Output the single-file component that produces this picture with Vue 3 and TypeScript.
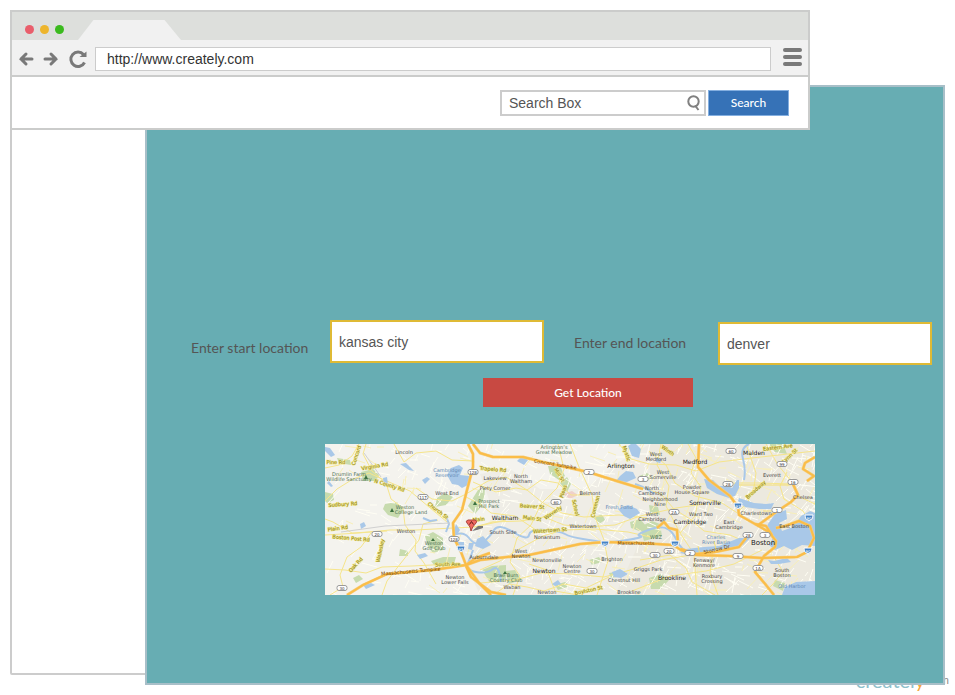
<script setup lang="ts">
import { ref } from 'vue'

interface MapLabel {
  x: number
  y: number
  text: string
  kind?: 'town' | 'park' | 'water' | 'road' | 'pike'
  size?: number
  angle?: number
}

interface Shield {
  x: number
  y: number
  text: string
  interstate?: boolean
}

const address = ref('http://www.creately.com')
const query = ref('')
const startLocation = ref('kansas city')
const endLocation = ref('denver')

const parks: string[] = [
  'M36 28l12-3 6 6-3 6-13 0z', 'M60 60l12-2 6 8-5 8-10-3-5-6z', 'M112 54l8-5 8 4-7 8-11 2z',
  'M143 62l10-16 7-3-1 16-9 11z', 'M100 92l8-4 10 6 0 12-10 3-5-6z', 'M106 117l12-4 13 0-2 7-8 2-12-1z',
  'M157 126l10-4 14-1 0 14-16 4z', 'M180 127l10-1 6 10-12 4z', 'M223 22l12 0 5 10-6 4-9-6z',
  'M235 39l7-6 4 7-4 8z', 'M269 74l8-4 3 6-6 4z', 'M305 78l10-3 7 8-8 4-8-3z', 'M264 116l10-3 3 5-10 3z',
  'M315 83l12-6 8 3 2 12-18 5z', 'M314 32l8-3 6 4-8 5z', 'M444 0l14 0 4 10-12-2z', 'M450 136l10 3-2 8-10-5z',
  'M324 134l12-4 8 6-8 9-10 0z', 'M75 105l8 2 0 5-9 0z', 'M0 48l8 2 1 6-7 3-2-2z', 'M12 14l13 2 1 5-12-2z',
  'M28 134l6-3 4 4-7 4z', 'M284 129l12-2 2 5-12 2z', 'M324 61l9 2 2 8-10-3z', 'M230 141l10-3 5 4-12 4z',
]

const waters: string[] = [
  'M126 24l8-3 4 3-3 7 10 1-2 9-6 3-4-3-6-1-5-9z', 'M0 3l5 1 5 7-4 2-6-6z', 'M75 20l6-1 8 8-5-1z',
  'M58 34l4-1 1 8-4 2z', 'M97 36l5-3 3 2-5 5z', 'M35 80l4-2 2 4-5 3z', 'M4 37l4 5-2 1-4-4z',
  'M128 89l3-9 4 6-3 5z', 'M132 98l7 0 0 6-7 2z', 'M144 99l5 0-2 7-4-1z', 'M92 111l8-2 3 3-8 3z',
  'M38 141l8-2 4 2-9 4z', 'M152 95l6-3 8 9-8 4-8-3z', 'M295 32l6-5 7 1 3 6-9 4-11-1z', 'M303 2l6-4 7 7-2 9-7-2z',
  'M293 65l10-4 9 4 3 4-10 6-6-3z', 'M287 128l8-3 8 5-7 4-7-1z', 'M227 140l6-4 3 4-6 2z',
  'M379 35l9 1 6 6 9 0 4 2 5-8 2 0 0 8-4 8-6 2-12-4-10-6z', 'M414 54l15 5 12 1 8-1-3 6-12 0-14-2-7-6z',
  'M443 80l7-10 11-4 1 9-8 4 3 8 11-4 8-11 9-5 5 2 0 33-13-1-10 5-8-4-9 4-6-5 5-9-10-2z',
  'M355 109l6-4 18-2 15-1 20-8 11 0-7 7-17 4-23 5-13 1z', 'M460 143l11-5 19-1 0 14-33 0z',
  'M443 116l6 1 13-3 4 4-12 2-8 0z', 'M331 14l6 1-2 4-4-1z', 'M197 12l-5 5 7 4 4-5z',
]

const rivers: string[] = [
  'M124 94Q137 85 144 94T158 98 169 86 188 88 204 91 220 86 240 90 258 95 277 98 302 96 315 92 326 85 350 93 360 105',
  'M148 106Q146 112 143 119T151 128 168 125 176 138', 'M419 36Q421 26 418 15T424 0', 'M310 40l8 3 12 7',
  'M98 74l7 3 7-1', 'M121 72l3 8-3 8',
]

const mainRoads: string[] = [
  'M0 24L14 21 27 12 34 0', 'M0 57L12 45 28 35 44 29 57 35 85 47 104 63 122 78', 'M0 91L34 89 65 86 91 86 128 84 150 83 181 76',
  'M0 75L8 78 27 89 62 87', 'M41 0L38 10 47 27 61 39 66 55 78 64 80 81 91 96 90 107 99 119 111 140',
  'M57 151L62 137 72 124 94 96 98 80 113 76', 'M0 125L20 126 41 129 57 123 87 122 127 120',
  'M91 44L107 55 127 57 141 50 163 37 181 33 202 46 218 59 237 69 259 73 294 71 322 74',
  'M148 17L127 16 111 7 91 9 79 18 69 0', 'M148 38L171 48 191 44 202 46 216 36 233 39 246 51 265 51',
  'M149 83L168 78 196 77 219 73 239 81 261 83 290 81 315 72 351 64 379 60',
  'M188 151L195 132 185 118 192 94 206 81 216 60 232 44 239 25 233 0',
  'M155 126L175 117 194 105 218 92 238 86 270 85 303 88 325 93',
  'M155 139L190 136 216 129 246 130 279 133 309 125 336 116 372 110',
  'M245 0L254 23 267 51 270 73 279 96 283 117 272 151', 'M294 0L306 15 324 20 351 21 371 27 394 18 427 14 490 7',
  'M318 44L336 50 349 65 365 75 379 87 405 91 421 98', 'M324 7L341 21 350 39 370 52 397 59 414 70',
  'M336 0L332 21 344 42 341 62 355 89 369 110 372 151', 'M363 0L371 14 366 29 376 43 370 72 355 89',
  'M374 23L391 45 412 39 434 39 467 40', 'M421 0L431 29 429 43 423 58 413 68', 'M441 0L453 21 467 38 475 53 490 60',
  'M388 107L385 129 393 151', 'M437 106L409 120 381 127 345 132 307 147', 'M315 116L345 111 361 124 367 138 390 151',
  'M449 113L458 128 448 140 437 151', 'M204 120L222 126 230 147 253 151', 'M171 149L184 140 202 143 219 147 239 140 261 144 284 133',
  'M5 151L18 143 15 131 22 113 36 103 46 89', 'M139 52L155 60 166 69 190 72 211 86', 'M462 28L455 42 459 55 478 67 490 85',
]

const highways: string[] = [
  'M143 0L148 10 148 23 142 46 137 66 128 79 129 94 136 108 141 121 154 139 166 151',
  'M148 0L155 9 168 13 198 13 218 18 263 28 295 38 318 45',
  'M22 151L38 141 62 130 108 126 141 121 155 116 182 113 204 111 232 105 255 100 280 98 315 99 348 101 356 106 371 111 405 112 437 114 472 113 482 108 489 94 485 82 474 77 460 82 451 84',
  'M332 84L339 78 344 84 352 86 353 100', 'M356 105L371 110 390 108 414 103 421 94',
  'M374 0L373 23 384 36 405 52 413 63 414 71 430 80 444 88 451 97 450 103 439 112 430 128 441 141 449 151',
  'M432 82L451 68 466 58 473 51 467 38', 'M490 13L480 19 478 25 489 32 482 37',
  'M141 121L151 114 165 109', 'M430 80L441 82 447 91', 'M141 122L146 133 154 139 166 148 181 151',
]

const labels: MapLabel[] = [
  { x: 79, y: 10, text: 'Lincoln' }, { x: 50, y: 24, text: 'Virginia Rd', kind: 'road', angle: -10 },
  { x: 24, y: 32, text: 'Drumlin Farm', kind: 'park' }, { x: 24, y: 37, text: 'Wildlife Sanctuary', kind: 'park' },
  { x: 122, y: 28, text: 'Cambridge', kind: 'water' }, { x: 122, y: 33, text: 'Reservoir', kind: 'water' },
  { x: 122, y: 51, text: 'West End' }, { x: 80, y: 65, text: 'Weston', kind: 'park' }, { x: 86, y: 70, text: 'College Land', kind: 'park' },
  { x: 81, y: 89, text: 'Weston' }, { x: 109, y: 101, text: 'Weston', kind: 'park' }, { x: 109, y: 106, text: 'Golf Club', kind: 'park' },
  { x: 130, y: 135, text: 'Newton' }, { x: 130, y: 140, text: 'Lower Falls' }, { x: 159, y: 115, text: 'Auburndale' },
  { x: 170, y: 36, text: 'Lakeview' }, { x: 196, y: 34, text: 'North' }, { x: 196, y: 39, text: 'Waltham' },
  { x: 170, y: 46, text: 'Piety Corner' }, { x: 164, y: 59, text: 'Prospect', kind: 'park' }, { x: 164, y: 64, text: 'Hill Park', kind: 'park' },
  { x: 180, y: 76, text: 'Waltham', kind: 'town' }, { x: 178, y: 90, text: 'South Side' }, { x: 196, y: 109, text: 'West' }, { x: 196, y: 114, text: 'Newton' },
  { x: 222, y: 95, text: 'Nonantum' }, { x: 222, y: 118, text: 'Newtonville' }, { x: 219, y: 129, text: 'Newton', kind: 'town' },
  { x: 247, y: 124, text: 'Newton' }, { x: 247, y: 129, text: 'Centre' }, { x: 181, y: 133, text: 'Brae Burn', kind: 'park' }, { x: 181, y: 138, text: 'Country Club', kind: 'park' },
  { x: 187, y: 145, text: 'Waban' }, { x: 222, y: 150, text: 'Newton' }, { x: 229, y: 5, text: 'Arlington’s', kind: 'park' }, { x: 229, y: 10, text: 'Great Meadow', kind: 'park' },
  { x: 296, y: 24, text: 'Arlington', size: 6 }, { x: 265, y: 51, text: 'Belmont' }, { x: 258, y: 84, text: 'Watertown' }, { x: 294, y: 65, text: 'Fresh Pond', kind: 'water' },
  { x: 287, y: 117, text: 'Brighton' }, { x: 299, y: 138, text: 'Chestnut Hill' }, { x: 323, y: 127, text: 'Griggs Park' }, { x: 304, y: 150, text: 'Brookline' },
  { x: 331, y: 12, text: 'West' }, { x: 331, y: 17, text: 'Medford' }, { x: 370, y: 20, text: 'Medford', kind: 'town' }, { x: 429, y: 11, text: 'Malden', size: 6 },
  { x: 447, y: 33, text: 'Everett' }, { x: 338, y: 30, text: 'West' }, { x: 338, y: 35, text: 'Somerville' }, { x: 327, y: 46, text: 'North' }, { x: 327, y: 51, text: 'Cambridge' },
  { x: 335, y: 57, text: 'Neighborhood' }, { x: 335, y: 62, text: 'Nine' }, { x: 367, y: 45, text: 'Powder' }, { x: 367, y: 50, text: 'House Square' },
  { x: 380, y: 61, text: 'Somerville', size: 6 }, { x: 327, y: 72, text: 'West' }, { x: 327, y: 77, text: 'Cambridge' }, { x: 376, y: 72, text: 'Ward Two' },
  { x: 365, y: 80, text: 'Cambridge', kind: 'town' }, { x: 404, y: 80, text: 'East' }, { x: 404, y: 85, text: 'Cambridge' }, { x: 431, y: 71, text: 'Charlestown' },
  { x: 478, y: 55, text: 'Chelsea' }, { x: 469, y: 84, text: 'East Boston' }, { x: 331, y: 95, text: 'WBZ', kind: 'park' }, { x: 391, y: 95, text: 'Charles', kind: 'water' }, { x: 391, y: 100, text: 'River Basin', kind: 'water' },
  { x: 438, y: 101, text: 'Boston', kind: 'town', size: 7 }, { x: 379, y: 118, text: 'Fenway/' }, { x: 379, y: 123, text: 'Kenmore' }, { x: 347, y: 136, text: 'Brookline', size: 6 },
  { x: 387, y: 134, text: 'Roxbury' }, { x: 387, y: 139, text: 'Crossing' }, { x: 457, y: 128, text: 'South' }, { x: 457, y: 133, text: 'Boston' }, { x: 467, y: 144, text: 'Old Harbor', kind: 'water' },
  { x: 33, y: 12, text: 'Concord', kind: 'road', angle: -72 }, { x: 11, y: 20, text: 'Pine Rd', kind: 'road' }, { x: 18, y: 62, text: 'Sudbury Rd', kind: 'road', angle: -4 },
  { x: 64, y: 43, text: 'N County Rd', kind: 'road', angle: 18 }, { x: 112, y: 68, text: 'Church St', kind: 'road', angle: 38 }, { x: 13, y: 86, text: 'Plain Rd', kind: 'road', angle: -8 },
  { x: 26, y: 96, text: 'Boston Post Rd', kind: 'road', angle: 5 }, { x: 57, y: 107, text: 'Wellesley', kind: 'road', angle: -78 }, { x: 32, y: 122, text: 'Oak Rd', kind: 'road', angle: -48 },
  { x: 86, y: 129, text: 'Massachusetts Turnpike', kind: 'pike', angle: -5 }, { x: 123, y: 122, text: 'South Ave', kind: 'road', angle: -2 }, { x: 154, y: 77, text: 'Main', kind: 'road', angle: -7 },
  { x: 168, y: 27, text: 'Trapelo Rd', kind: 'road', angle: 5 }, { x: 230, y: 22, text: 'Concord Turnpike', kind: 'pike', angle: 9 }, { x: 233, y: 32, text: 'Mill St', kind: 'road', angle: 58 },
  { x: 240, y: 48, text: 'Pleas', kind: 'road', angle: -72 }, { x: 207, y: 64, text: 'Beaver St', kind: 'road', angle: 4 }, { x: 229, y: 70, text: 'Waverly', kind: 'road', angle: -34 },
  { x: 207, y: 76, text: 'Main St', kind: 'road', angle: 7 }, { x: 249, y: 64, text: 'School', kind: 'road', angle: 77 }, { x: 272, y: 63, text: 'Common', kind: 'road', angle: -76 },
  { x: 225, y: 88, text: 'Watertown St', kind: 'road', angle: -4 }, { x: 311, y: 101, text: 'Massachusetts', kind: 'pike' }, { x: 392, y: 107, text: 'Storrow Dr', kind: 'pike', angle: -13 },
  { x: 432, y: 47, text: 'Broadway', kind: 'road', angle: -42 }, { x: 453, y: 5, text: 'Eastern Ave', kind: 'road', angle: -7 }, { x: 466, y: 13, text: 'Lynn St', kind: 'road', angle: -43 },
  { x: 300, y: 10, text: 'Mystic', kind: 'road', angle: 72 }, { x: 342, y: 8, text: 'Winth', kind: 'road', angle: 35 }, { x: 264, y: 148, text: 'Boylston St', kind: 'road', angle: -12 },
]

const shields: Shield[] = [
  { x: 98, y: 53, text: '117' }, { x: 148, y: 28, text: '128' }, { x: 52, y: 90, text: '20' }, { x: 17, y: 144, text: '30' },
  { x: 129, y: 95, text: '128' }, { x: 136, y: 105, text: '95', interstate: true }, { x: 264, y: 28, text: '2' }, { x: 231, y: 58, text: '60' },
  { x: 267, y: 127, text: '30' }, { x: 280, y: 100, text: '90', interstate: true }, { x: 318, y: 35, text: '3' }, { x: 406, y: 7, text: '60' },
  { x: 457, y: 20, text: '99' }, { x: 403, y: 40, text: '28' }, { x: 468, y: 38, text: '16' }, { x: 349, y: 68, text: '2A' },
  { x: 413, y: 62, text: '93', interstate: true }, { x: 452, y: 66, text: '1' }, { x: 350, y: 100, text: '90', interstate: true },
  { x: 423, y: 91, text: '28' }, { x: 440, y: 91, text: '3' }, { x: 365, y: 109, text: '2' }, { x: 344, y: 107, text: '20' }, { x: 330, y: 111, text: '30' },
  { x: 413, y: 112, text: '9' }, { x: 433, y: 124, text: '1A' }, { x: 484, y: 74, text: '90', interstate: true }, { x: 483, y: 107, text: '90', interstate: true },
]

/** Short residential streets, denser towards the city centre. */
function buildStreets(seed: number, count: number): string {
  const next = (): number => {
    seed = (seed * 16807) % 2147483647
    return seed / 2147483647
  }
  let path = ''
  for (let i = 0; i < count; i++) {
    const x = Math.round(490 * Math.pow(next(), 0.65))
    const y = Math.round(151 * next())
    const length = 5 + next() * 13
    const angle = (next() < 0.5 ? 0.35 : -1.1) + (next() - 0.5) * 0.7
    path += `M${x} ${y}l${Math.round(Math.cos(angle) * length)} ${Math.round(Math.sin(angle) * length)}`
  }
  return path
}

const streets = buildStreets(41, 620)
const avenues = buildStreets(977, 200)
</script>

<template>
  <main class="desktop">
    <a class="brand" href="#"><span class="brand-name">createl<span class="brand-tail">y</span></span><span class="brand-domain">.com</span></a>
    <div class="frame"></div>

    <header class="browser">
      <div class="tab-strip">
        <span class="dot red"></span>
        <span class="dot amber"></span>
        <span class="dot green"></span>
        <span class="tab"></span>
      </div>
      <div class="toolbar">
        <button class="icon-button" type="button" aria-label="Back">
          <svg width="16" height="16" viewBox="0 0 16 16"><path d="M14 8H3M8 3L3 8l5 5" /></svg>
        </button>
        <button class="icon-button" type="button" aria-label="Forward">
          <svg width="16" height="16" viewBox="0 0 16 16"><path d="M2 8h11M8 3l5 5-5 5" /></svg>
        </button>
        <button class="icon-button" type="button" aria-label="Reload">
          <svg class="reload" width="20" height="20" viewBox="0 0 20 20">
            <path d="M16.500 13.500A7.200 7.200 0 1 1 15.500 5.500" />
            <path class="solid" d="M18.500 2.500v5.500h-7z" />
          </svg>
        </button>
        <input v-model="address" class="address" type="text" aria-label="Address" />
        <button class="menu" type="button" aria-label="Menu"><span></span><span></span><span></span></button>
      </div>
      <form class="search" @submit.prevent>
        <div class="search-box">
          <input v-model="query" type="text" placeholder="Search Box" aria-label="Search Box" />
          <svg width="16" height="18" viewBox="0 0 16 18"><circle cx="7.500" cy="7.500" r="5.200" /><path d="M9 11.500L12.500 16" /></svg>
        </div>
        <button type="submit">Search</button>
      </form>
    </header>

    <section class="panel">
      <form class="route" @submit.prevent>
        <label class="start-label" for="start">Enter start location</label>
        <input id="start" v-model="startLocation" type="text" />
        <label class="end-label" for="end">Enter end location</label>
        <input id="end" v-model="endLocation" class="end-input" type="text" />
        <button type="submit">Get Location</button>
      </form>

      <svg class="map" viewBox="0 0 490 151" role="img" aria-label="Map">
        <rect class="land" width="490" height="151" />
        <path class="urban" d="M155 30L185 25 215 45 260 45 294 18 325 0H490V151H155L141 121 135 100 170 73z" />
        <path class="urban dense" d="M325 0H490V151H290L310 108 325 70z" />
        <path v-for="(d, i) in parks" :key="'p' + i" class="park" :d="d" />
        <path class="hospital" d="M238 50l9-3 6 4-8 4z" />
        <path class="streets" :d="streets" />
        <path class="avenues" :d="avenues" />
        <path v-for="(d, i) in mainRoads" :key="'m' + i" class="main-road" :d="d" />
        <path v-for="(d, i) in waters" :key="'w' + i" class="water" :d="d" />
        <path v-for="(d, i) in rivers" :key="'r' + i" class="river" :d="d" />
        <path class="rail" d="M39 9L56 33M16 88L60 82 125 79" />
        <path class="bridge" d="M373 102l2 9M389 97l3 12M414 41h52M438 67l15 0" />
        <path v-for="(d, i) in highways" :key="'e' + i" class="highway-edge" :d="d" />
        <path v-for="(d, i) in highways" :key="'h' + i" class="highway" :d="d" />
        <g class="trees"><path d="M41 31l2 4h-4zM67 64l2 4h-4zM150 57l2 4h-4zM108 94l2 3h-4zM180 127l2 3h-4z" /><path d="M331 87v4M329 89h4" /></g>
        <text
          v-for="(label, i) in labels"
          :key="'l' + i"
          :x="label.x"
          :y="label.y"
          :class="label.kind"
          :font-size="label.size"
          :transform="label.angle ? `rotate(${label.angle} ${label.x} ${label.y})` : undefined"
        >{{ label.text }}</text>
        <g v-for="(s, i) in shields" :key="'s' + i" :class="['shield', { interstate: s.interstate }]">
          <path v-if="s.interstate" :d="`M${s.x - 4} ${s.y - 3}h8q1 4-4 6-5-2-4-6z`" />
          <rect v-else :x="s.x - 5" :y="s.y - 2.500" width="10" height="5" rx="2" />
          <text :x="s.x" :y="s.y + 1.500">{{ s.text }}</text>
        </g>
        <path class="pin-shadow" d="M147 87l6-5 5 0 0 2-6 2z" />
        <path class="pin" d="M146 87Q146 83 142 79 140 77 143 76h7q3 1 1 3-4 4-5 8z" />
        <path class="pin-mark" d="M144.500 80.500l2-3 2 3" />
      </svg>
    </section>
  </main>
</template>

<style>
body {
  margin: 0;
  background: #fff;
}
</style>

<style scoped>
* {
  box-sizing: border-box;
}

.desktop {
  position: relative;
  display: grid;
  grid-template-columns: 135px minmax(0, 1fr) 135px;
  grid-template-rows: 75px 45px 1fr 10px;
  min-height: 100vh;
  padding: 10px;
  overflow: hidden;
  font-family: "Liberation Sans", Arial, sans-serif;
  font-size: 14px;
  color: #555;
}

button {
  border: 0;
  padding: 0;
  font: inherit;
  cursor: pointer;
}

input {
  min-width: 0;
  margin: 0;
  font: inherit;
  color: inherit;
  border-radius: 0;
  outline: 0;
}

.brand {
  position: absolute;
  right: 6px;
  bottom: 2px;
  display: flex;
  align-items: flex-end;
  font-family: Lato, sans-serif;
  line-height: 26px;
  text-decoration: none;
}

.brand-name {
  font-size: 20px;
  color: #8ec0cb;
}

.brand-tail {
  color: #f6a73c;
}

.brand-domain {
  font-family: "Liberation Sans", Arial, sans-serif;
  font-size: 11px;
  color: #888;
}

.frame {
  grid-area: 1 / 1 / 4 / 3;
  border: 2px solid #ccc;
  border-radius: 2px;
}

.browser {
  z-index: 2;
  grid-area: 1 / 1 / 3 / 3;
  display: flex;
  flex-direction: column;
  background: #fff;
  border: 2px solid #cbcccb;
}

.tab-strip {
  display: flex;
  gap: 6px;
  height: 28px;
  padding: 0 13px;
  background: #dddfdc;
}

.dot {
  width: 9px;
  height: 9px;
  margin-top: 13px;
  border-radius: 50%;
}

.red {
  background: #e95e6b;
}

.amber {
  background: #edb52c;
}

.green {
  background: #3aba1d;
}

.tab {
  align-self: flex-end;
  width: 103px;
  height: 20px;
  margin-left: 8px;
  background: #f1f1f1;
  clip-path: polygon(15% 0, 84% 0, 100% 100%, 0 100%);
}

.toolbar {
  display: flex;
  align-items: center;
  height: 37px;
  padding: 2px 6px 0;
  background: #f1f1f1;
  border-bottom: 2px solid #cbcccb;
}

.icon-button {
  display: flex;
  margin-right: 9px;
  background: none;
}

.icon-button svg {
  fill: none;
  stroke: #797979;
  stroke-width: 3;
  stroke-linecap: round;
}

.icon-button .reload {
  stroke-linecap: butt;
}

.icon-button .solid {
  fill: #797979;
  stroke: none;
}

.address {
  flex: 1;
  height: 24px;
  margin: 1px 12px 0 -2px;
  padding: 0 11px;
  color: #333;
  background: #fff;
  border: 1px solid #ccc;
}

.menu {
  display: flex;
  flex-direction: column;
  gap: 3px;
  width: 19px;
  margin-bottom: 3px;
  background: none;
}

.menu span {
  width: 100%;
  height: 4px;
  background: #797979;
  border-radius: 2px;
}

.search {
  display: flex;
  flex: 1;
  gap: 2px;
  align-items: center;
  justify-content: flex-end;
  padding-right: 19px;
}

.search-box {
  display: flex;
  align-items: center;
  width: 206px;
  height: 26px;
  padding: 0 2px 0 7px;
  border: 2px solid #ccc;
}

.search-box input {
  flex: 1;
  padding: 0;
  background: none;
  border: 0;
}

.search-box input::placeholder {
  color: #555;
  opacity: 1;
}

.search-box svg {
  fill: none;
  stroke: #808080;
  stroke-width: 2;
}

.search button {
  width: 81px;
  height: 26px;
  font-family: Lato, sans-serif;
  font-size: 12px;
  font-weight: 500;
  color: #fff;
  background: #3672b7;
  border: 1px solid #84afe0;
}

.panel {
  z-index: 1;
  grid-area: 2 / 2 / 5 / 4;
  background: #67adb3;
  border: 2px solid #a8bfc8;
}

.route {
  display: grid;
  grid-template-columns: 139px minmax(0, 1fr) 174px minmax(0, 1fr);
  padding: 233px 11px 0 44px;
}

.route label {
  align-self: center;
  font-family: Lato, sans-serif;
  line-height: 18px;
}

.route .start-label {
  padding-top: 10px;
}

.route .end-label {
  padding-left: 30px;
}

.route input {
  height: 43px;
  padding: 0 7px;
  background: #fff;
  border: 2px solid #dfba35;
}

.route .end-input {
  margin-top: 2px;
}

.route button {
  grid-column: 1 / -1;
  width: 210px;
  height: 29px;
  margin: 13px 0 0 292px;
  font-family: Lato, sans-serif;
  font-size: 12px;
  font-weight: 500;
  color: #fff;
  background: #c84942;
}

.map {
  display: block;
  width: 490px;
  max-width: 100%;
  margin: 37px 0 0 178px;
}

.map path {
  fill: none;
  stroke-linejoin: round;
}

.map .land {
  fill: #f4f3ee;
}

.map .urban {
  fill: #efede6;
}

.map .dense {
  fill: #ece9df;
}

.map .park {
  fill: #c7dbae;
}

.map .hospital {
  fill: #efd0ca;
}

.map .streets {
  stroke: #fffef4;
  stroke-width: 1;
}

.map .avenues {
  stroke: #f8efb9;
  stroke-width: 1;
}

.map .main-road {
  stroke: #f6e58b;
  stroke-width: 1;
}

.map .water {
  fill: #a9c8e8;
}

.map .river {
  stroke: #a9c8e8;
  stroke-width: 2;
}

.map .rail {
  stroke: #d0d0d0;
}

.map .bridge {
  stroke: #f6df72;
}

.map .highway-edge {
  stroke: #f3cf83;
  stroke-width: 3;
}

.map .highway {
  stroke: #fbbd48;
  stroke-width: 2;
}

.map .trees path {
  fill: #3d7240;
  stroke: none;
}

.map text {
  font-family: "DejaVu Sans", sans-serif;
  font-size: 5px;
  fill: #474747;
  text-anchor: middle;
}

.map text[font-size="6"],
.map text.town {
  font-size: 6px;
  fill: #222;
}

.map text[font-size="7"] {
  font-size: 7px;
}

.map text.park {
  fill: #4c7053;
}

.map text.water {
  fill: #6389b5;
}

.map text.road {
  fill: #8a7d1c;
  paint-order: stroke;
  stroke: #f1e788;
  stroke-width: 1px;
}

.map text.pike {
  fill: #754300;
}

.shield rect {
  fill: #fff;
  stroke: #999;
  stroke-width: 1;
}

.map .shield text {
  font-size: 4px;
  fill: #333;
}

.map .interstate path {
  fill: #4482c5;
  stroke: #fff;
}

.map .interstate text {
  fill: #fff;
}

.map .pin-shadow {
  fill: #777;
}

.map .pin {
  fill: #f1685f;
  stroke: #a9443d;
}

.map .pin-mark {
  stroke: #611f1d;
}
</style>
